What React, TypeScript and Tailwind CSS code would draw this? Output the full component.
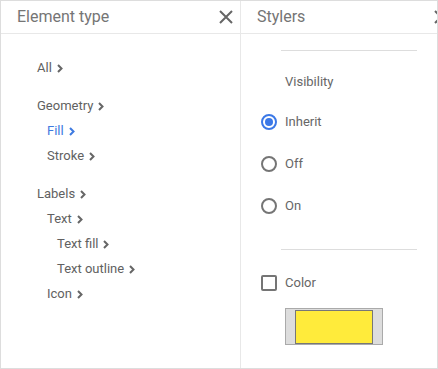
import React from "react";

function CloseIcon() {
  return (
    <svg width="14" height="14" viewBox="0 0 14 14" className="shrink-0">
      <path d="M1 1L13 13M13 1L1 13" stroke="#666" strokeWidth="2" fill="none" />
    </svg>
  );
}

function Chevron({ color = "#666" }: { color?: string }) {
  return (
    <svg width="6" height="9" viewBox="0 0 6 9" className="ml-[5px] mt-[1px]">
      <path d="M1 1L4.5 4.5L1 8" stroke={color} strokeWidth="2" fill="none" />
    </svg>
  );
}

type Item = { label: string; indent: number; active?: boolean };

const groups: Item[][] = [
  [{ label: "All", indent: 0 }],
  [
    { label: "Geometry", indent: 0 },
    { label: "Fill", indent: 1, active: true },
    { label: "Stroke", indent: 1 },
  ],
  [
    { label: "Labels", indent: 0 },
    { label: "Text", indent: 1 },
    { label: "Text fill", indent: 2 },
    { label: "Text outline", indent: 2 },
    { label: "Icon", indent: 1 },
  ],
];

const indents = ["pl-0", "pl-[10px]", "pl-[20px]"];

function Radio({ checked, label }: { checked?: boolean; label: string }) {
  return (
    <div className="flex items-center h-[42px]">
      <span
        className={`w-4 h-4 rounded-full border-2 flex items-center justify-center ${
          checked ? "border-[#3b78e7]" : "border-[#757575]"
        }`}
      >
        {checked && <span className="w-2 h-2 rounded-full bg-[#3b78e7]" />}
      </span>
      <span className="ml-[8px] text-[13px] text-[#666]">{label}</span>
    </div>
  );
}

export default function App() {
  return (
    <div className="w-[438px] h-[369px] bg-white border border-[#ddd] flex overflow-hidden font-['Roboto',sans-serif]">
      {/* Element type */}
      <div className="w-[240px] shrink-0 border-r border-[#e8e8e8] flex flex-col">
        <div className="h-[33px] border-b border-[#e8e8e8] flex items-center justify-between pl-4 pr-[7px]">
          <span className="text-[16px] text-[#757575]">Element type</span>
          <CloseIcon />
        </div>
        <div className="pl-[36px] pt-[21px] flex flex-col gap-[13px]">
          {groups.map((g, i) => (
            <div key={i} className="flex flex-col">
              {g.map((it) => (
                <div
                  key={it.label}
                  className={`h-[25px] flex items-center text-[13px] ${indents[it.indent]} ${
                    it.active ? "text-[#3e7ae0]" : "text-[#616161]"
                  }`}
                >
                  {it.label}
                  <Chevron color={it.active ? "#3e7ae0" : "#666"} />
                </div>
              ))}
            </div>
          ))}
        </div>
      </div>

      {/* Stylers */}
      <div className="flex-1 overflow-hidden">
        <div className="w-[214px] flex flex-col">
          <div className="h-[33px] border-b border-[#e8e8e8] flex items-center justify-between pl-4 pr-[7px]">
            <span className="text-[16px] text-[#757575]">Stylers</span>
            <CloseIcon />
          </div>
          <div className="pl-[20px] flex flex-col">
            <div className="mt-[16px] ml-[20px] w-[136px] h-px bg-[#ddd]" />
            <div className="mt-[22px] ml-[24px] text-[13px] text-[#666] leading-[18px]">Visibility</div>
            <div className="mt-[10px] flex flex-col">
              <Radio checked label="Inherit" />
              <Radio label="Off" />
              <Radio label="On" />
            </div>
            <div className="mt-[22px] ml-[20px] w-[136px] h-px bg-[#ddd]" />
            <div className="mt-[23px] h-[20px] flex items-center">
              <span className="w-4 h-4 border-2 border-[#757575] rounded-[2px]" />
              <span className="ml-[8px] text-[13px] text-[#666]">Color</span>
            </div>
            <div className="mt-[15px] ml-[24px] w-[98px] h-[37px] bg-[#ddd] border border-[#aaa] flex items-center justify-center">
              <div className="w-[78px] h-[34px] bg-[#ffeb3b] border border-[#777]" />
            </div>
          </div>
        </div>
      </div>
    </div>
  );
}
